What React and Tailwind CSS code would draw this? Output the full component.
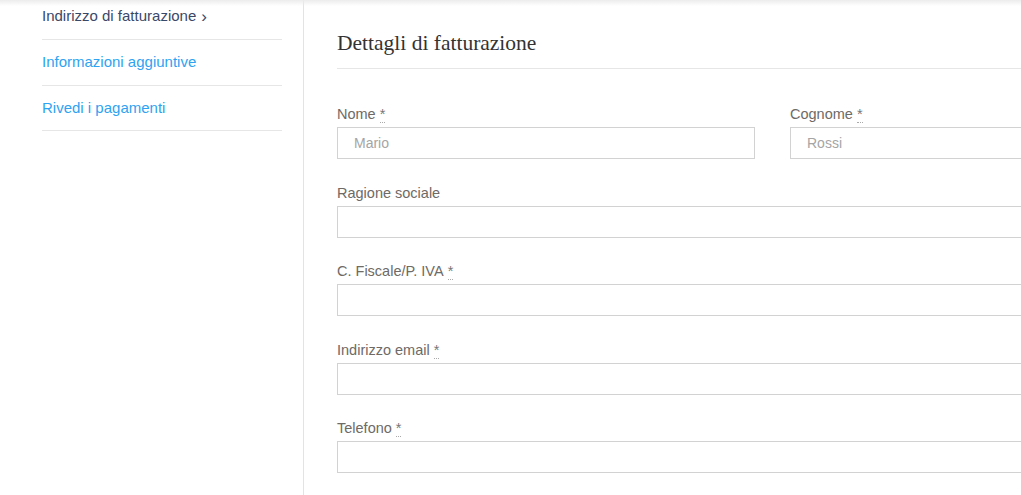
import React from "react";

function Req() {
  return (
    <abbr
      title="obbligatorio"
      className="ml-[4px] no-underline border-b border-dotted border-[#aaa] text-[#777]"
    >
      *
    </abbr>
  );
}

function Field({ label, required, placeholder, className = "" }) {
  return (
    <div className={"flex flex-col " + className}>
      <label className="h-[20px] leading-[22px] text-[14.5px] text-[#6e6a66] mb-[4px]">
        {label}
        {required && <Req />}
      </label>
      <input
        placeholder={placeholder}
        className="h-[32px] border border-[#d2d2d2] px-[16px] text-[14px] text-[#555] placeholder:text-[#a5a5a5] outline-none bg-white"
      />
    </div>
  );
}

export default function App() {
  return (
    <div
      className="relative w-[1021px] h-[495px] overflow-hidden bg-white flex"
      style={{ fontFamily: '"Liberation Sans", Arial, sans-serif' }}
    >
      <div className="absolute top-0 left-0 right-0 h-[6px] bg-gradient-to-b from-[#ececec] to-transparent" />
      <aside className="w-[304px] shrink-0 border-r border-[#e3e3e3] pl-[42px] pr-[21px]">
        <ul className="-mt-[6px]">
          <li className="h-[46px] border-b border-[#e6e6e6] flex items-center text-[15px] text-[#3a4868]">
            Indirizzo di fatturazione
            <span className="ml-[5px] text-[17px] leading-none">›</span>
          </li>
          <li className="h-[46px] border-b border-[#e6e6e6] flex items-center text-[15px] text-[#2ea3f2]">
            Informazioni aggiuntive
          </li>
          <li className="h-[45px] border-b border-[#e6e6e6] flex items-center text-[15px] text-[#2ea3f2]">
            Rivedi i pagamenti
          </li>
        </ul>
      </aside>
      <main className="flex-1 pl-[33px]">
        <div className="w-[871px]">
          <div className="h-[69px] border-b border-[#e6e6e6] pt-[30px]">
            <h2
              className="text-[21.5px] leading-[26px] text-[#333]"
              style={{ fontFamily: '"Liberation Serif", "Times New Roman", serif' }}
            >
              Dettagli di fatturazione
            </h2>
          </div>
          <div className="pt-[34px] flex flex-col gap-[22.5px]">
            <div className="grid grid-cols-2 gap-[35px]">
              <Field label="Nome" required placeholder="Mario" />
              <Field label="Cognome" required placeholder="Rossi" />
            </div>
            <Field label="Ragione sociale" />
            <Field label="C. Fiscale/P. IVA" required />
            <Field label="Indirizzo email" required />
            <Field label="Telefono" required />
          </div>
        </div>
      </main>
    </div>
  );
}
